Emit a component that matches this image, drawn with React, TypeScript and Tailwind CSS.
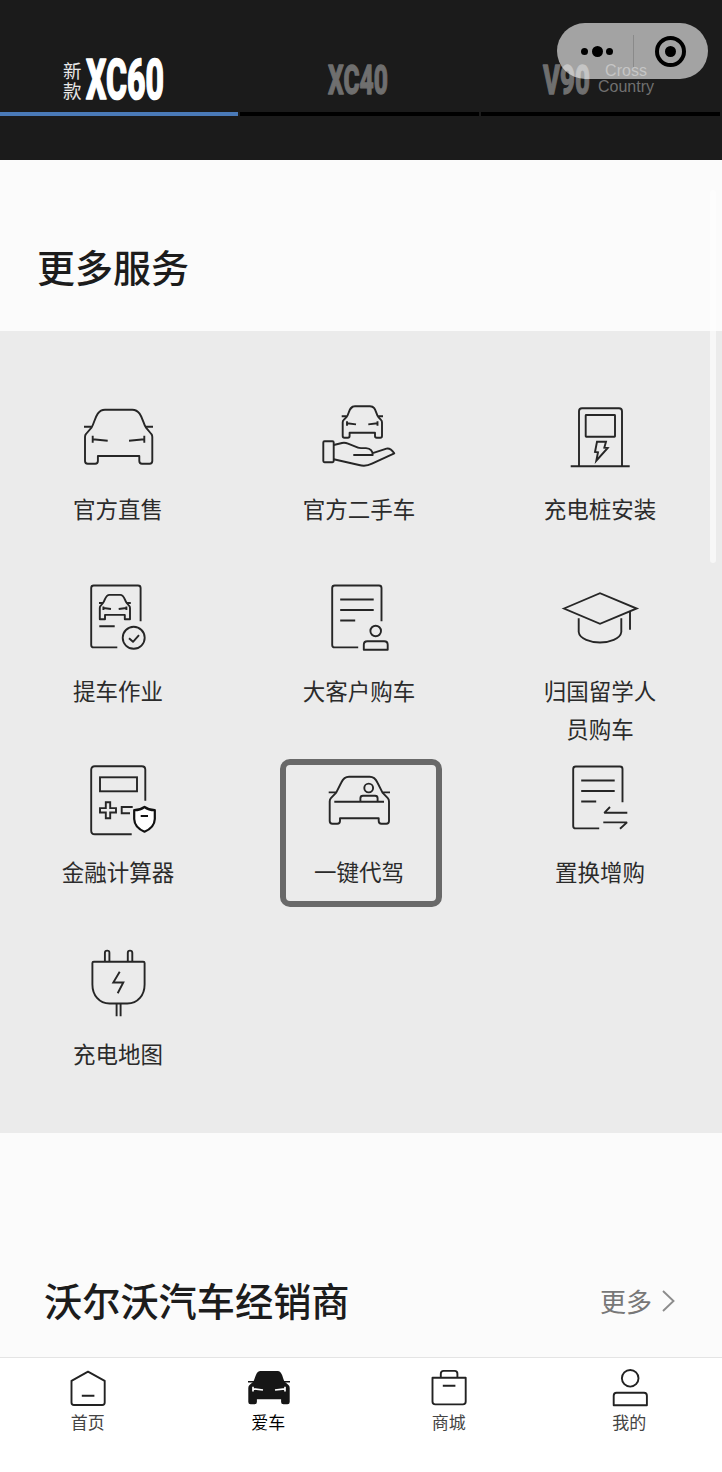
import React from 'react';

type IconProps = { children: React.ReactNode };

// Shared frame for the outlined service icons
const LineIcon: React.FC<IconProps> = ({ children }) => (
  <svg
    viewBox="0 0 81 80"
    className="w-[81px] h-20 shrink-0"
    fill="none"
    stroke="#262626"
    strokeWidth="1.9"
    strokeLinejoin="round"
  >
    {children}
  </svg>
);

const TabIcon: React.FC<IconProps> = ({ children }) => (
  <svg
    viewBox="0 0 44 44"
    className="size-11 shrink-0"
    fill="none"
    stroke="#222"
    strokeWidth="1.9"
    strokeLinejoin="round"
  >
    {children}
  </svg>
);

const DocumentLines = () => (
  <path d="M39.2 69.4 H15.7 Q13.2 69.4 13.2 66.9 V10 Q13.2 7.5 15.7 7.5 H60 Q62.5 7.5 62.5 10 V43.3 M21.2 21.5 H54.7 M21.2 32 H54.7 M21.2 42.5 H36.2" />
);

const SERVICES = [
  {
    label: '官方直售',
    icon: (
      <LineIcon>
        <path d="M13.7 31.3 C17 26.5 17.5 13.7 27 13.7 H54.3 C63.8 13.7 64.5 26.5 67.8 31.3 L73.3 38 Q74.3 39 74.3 41 V65 Q74.3 67.7 71.6 67.7 H64 Q61.3 67.7 61.3 65 V60 H19.9 V65 Q19.9 67.7 17.2 67.7 H9.7 Q7 67.7 7 65 V41 Q7 39 8 38 Z" />
        <path d="M6 30.8 H13.7 M67.8 30.8 H75 M14.7 39.7 V46.7 M14.7 43.3 L29.7 44.7 M66.3 39.7 V46.7 M66.3 43.3 L51 44.7" />
      </LineIcon>
    ),
  },
  {
    label: '官方二手车',
    icon: (
      <LineIcon>
        <path d="M27.7 20.8 C30.5 17 30 10.3 36 10.3 H51 C57 10.3 56.4 17 59.2 20.8 L62.2 24.2 Q63 25 63 26.5 V40 Q63 41.7 61.3 41.7 H57.7 Q56 41.7 56 40 V36.7 H30.6 V40 Q30.6 41.7 28.9 41.7 H25.4 Q23.7 41.7 23.7 40 V26.5 Q23.7 25 24.5 24.2 Z" />
        <path d="M22.7 20.3 H27.7 M59.2 20.3 H64 M28 25.3 V29.7 M28 27.3 L37 28.4 M58.5 25.3 V29.7 M58.5 27.3 L49.3 28.4" />
        <rect x="4.3" y="45.3" width="10.4" height="21" rx="1.2" />
        <path d="M14.7 49 L23 47 Q26 46.4 29 47.6 L39 51.7 Q40 52.1 42 52.1 H47 Q53.7 52.5 53.7 59 H34.3 M53.7 57.2 L67.5 52.6 Q71.5 51.8 75.3 57.3 L53 67.7 Q46.5 71 40 69 L14.7 63.2" />
      </LineIcon>
    ),
  },
  {
    label: '充电桩安装',
    icon: (
      <LineIcon>
        <path d="M19 70 V15.3 Q19 12.3 22 12.3 H59 Q62 12.3 62 15.3 V70 M10.7 70.3 H69.7" />
        <rect x="25.7" y="19" width="29.3" height="21.7" rx="0.5" />
        <path d="M37 45.7 H46 L44.3 51.7 L47.7 52 L36.3 64.7 L38 56.3 L35 56 Z" strokeLinejoin="miter" />
      </LineIcon>
    ),
  },
  {
    label: '提车作业',
    icon: (
      <LineIcon>
        <path d="M39.3 69.4 H15.7 Q13.2 69.4 13.2 66.9 V10 Q13.2 7.5 15.7 7.5 H60 Q62.6 7.5 62.6 10 V43.2 M21.3 48.2 H36.7" />
        <path d="M25 25 C27.4 22 27.2 16.9 31.5 16.9 H42.2 C46.5 16.9 46.3 22 48.7 25 L51.3 28 Q52 28.7 52 30 V41.2 H46.8 V36.9 H27 V41.2 H21.8 V30 Q21.8 28.7 22.5 28 Z" />
        <path d="M21 25 H25 M48.7 25 H52.8 M25.4 28.4 V32 M25.4 30 L33 31 M48.4 28.4 V32 M48.4 30 L40.7 31" />
        <circle cx="55.7" cy="59.8" r="11" />
        <path d="M51 60.2 L55 63.8 L61 57.2" />
      </LineIcon>
    ),
  },
  {
    label: '大客户购车',
    icon: (
      <LineIcon>
        <DocumentLines />
        <circle cx="56.7" cy="53" r="5.3" />
        <path d="M44.8 71.8 V66.8 Q44.8 63.3 48.3 63.3 H65.2 Q68.7 63.3 68.7 66.8 V71.8 Z" />
      </LineIcon>
    ),
  },
  {
    label: '归国留学人员购车',
    icon: (
      <LineIcon>
        <path d="M4 30.5 L40 15.2 L76.7 30.5 L40 45.8 Z" strokeLinejoin="miter" />
        <path d="M18.7 40.2 V54 C19.5 61 31 64.5 40 64.5 S60.5 61 61.3 54 V40.2 M70 33.3 V51.8" />
      </LineIcon>
    ),
  },
  {
    label: '金融计算器',
    icon: (
      <LineIcon>
        <path d="M53.7 75.3 H16.8 Q13.2 75.3 13.2 71.8 V10.8 Q13.2 7.3 16.8 7.3 H63.8 Q67.3 7.3 67.3 10.8 V41.7" />
        <g strokeLinejoin="miter">
          <rect x="22" y="18.3" width="37" height="14" />
          <path d="M27.8 43.3 H32.2 V49.1 H38 V53.5 H32.2 V59.3 H27.8 V53.5 H22 V49.1 H27.8 Z M54.7 48 H43.7 V54.3 H52" />
        </g>
        <path
          d="M66.5 48 Q70.5 51 76.8 51.2 V60 Q76.5 68.5 66.5 72.7 Q56.5 68.5 56.2 60 V51.2 Q62.5 51 66.5 48 Z M62.7 57 H70"
          fill="#fff"
          stroke="#111"
          strokeWidth="2.2"
        />
      </LineIcon>
    ),
  },
  {
    label: '一键代驾',
    highlighted: true,
    icon: (
      <LineIcon>
        <path d="M17.2 33.7 L22.3 23.5 Q25 17.7 30 17.7 H50.7 Q55.7 17.7 58.4 23.5 L63.5 33.7 L68.8 39.2 Q70 40.5 70 42.5 V62 Q70 64.7 67.3 64.7 H62.4 Q59.7 64.7 59.7 62 V59.3 H21 V62 Q21 64.7 18.3 64.7 H13.4 Q10.7 64.7 10.7 62 V42.5 Q10.7 40.5 11.9 39.2 Z" />
        <path d="M9.7 33.4 H17 M63.7 33.4 H71 M15.3 42.7 H65 M41.4 42.7 V39.2 Q41.4 36.7 43.9 36.7 H56.1 Q58.6 36.7 58.6 39.2 V42.7" />
        <circle cx="49.7" cy="29" r="4.4" />
      </LineIcon>
    ),
  },
  {
    label: '置换增购',
    icon: (
      <LineIcon>
        <DocumentLines />
        <path d="M50 48 L44.3 53.8 H67.3 M43.3 63.4 H67 L60 69.7" strokeLinejoin="bevel" />
      </LineIcon>
    ),
  },
  {
    label: '充电地图',
    icon: (
      <LineIcon>
        <path d="M15.8 20.7 H65.2 Q66.6 20.7 66.6 22.1 V43.5 C66.6 54 60 62.5 49.3 62.5 H31.6 C21 62.5 14.4 54 14.4 43.5 V22.1 Q14.4 20.7 15.8 20.7 Z" />
        <path d="M26.9 20.5 V11.7 Q26.9 9.6 29.2 9.6 T31.4 11.7 V20.5 M49.8 20.5 V11.7 Q49.8 9.6 52 9.6 T54.3 11.7 V20.5 M38.6 62.5 V75.2 M42.6 62.5 V75.2" />
        <path d="M41.7 30.8 L35.3 41.5 H45.3 L39.7 52.2" strokeLinejoin="miter" />
      </LineIcon>
    ),
  },
];

const TABS = [
  {
    label: '首页',
    icon: (
      <TabIcon>
        <path d="M5.5 14.8 L22 5.6 L38.7 14.8 V36.5 Q38.7 39 36.2 39 H8 Q5.5 39 5.5 36.5 Z M15.8 29.7 H28.4" />
      </TabIcon>
    ),
  },
  {
    label: '爱车',
    active: true,
    icon: (
      <TabIcon>
        <path
          d="M6.3 15.8 C8.2 13 8.6 5 13.5 5 H30.5 C35.4 5 35.8 13 37.7 15.8 L41.5 19 Q42.7 20 42.7 22 V36 Q42.7 38.3 40.4 38.3 H36.4 Q34.1 38.3 34.1 36 V33.3 H9.9 V36 Q9.9 38.3 7.6 38.3 H3.6 Q1.3 38.3 1.3 36 V22 Q1.3 20 2.5 19 Z"
          fill="#161616"
          stroke="none"
        />
        <path d="M1 15.7 H8 M36 15.7 H43" stroke="#161616" strokeWidth="1.6" />
        <path d="M6 20.7 V25.5 M6 22.8 L16 24 M38 20.7 V25.5 M38 22.8 L28 24" stroke="#fff" strokeWidth="1.7" />
      </TabIcon>
    ),
  },
  {
    label: '商城',
    icon: (
      <TabIcon>
        <path d="M5.5 11.8 H38.7 V35.6 Q38.7 38.4 35.9 38.4 H8.3 Q5.5 38.4 5.5 35.6 Z M13.8 11.8 V7.7 Q13.8 4.9 16.6 4.9 H27.6 Q30.4 4.9 30.4 7.7 V11.8 M15.8 19.8 H28.4" />
      </TabIcon>
    ),
  },
  {
    label: '我的',
    icon: (
      <TabIcon>
        <circle cx="22.2" cy="12.3" r="8.3" />
        <path d="M5.7 39.2 V29.7 Q5.7 26.8 8.6 26.8 H36 Q38.9 26.8 38.9 29.7 V39.2 Z" />
      </TabIcon>
    ),
  },
];

type ModelNameProps = { name: string; width: number; height: number; className: string };

// Condensed model lettering, squeezed to the given box
const ModelName: React.FC<ModelNameProps> = ({ name, width, height, className }) => (
  <svg width={width} height={height} className={`shrink-0 overflow-visible ${className}`}>
    <text
      x="0"
      y={height - 0.8}
      textLength={width}
      lengthAdjust="spacingAndGlyphs"
      fontSize={(height - 1.5) / 0.715}
      fontFamily="Roboto, 'Liberation Sans', sans-serif"
      fontWeight="800"
      fill="currentColor"
      stroke="currentColor"
      strokeWidth={height / 24}
      strokeLinejoin="round"
    >
      {name}
    </text>
  </svg>
);

const ModelTabs = () => (
  <header className="relative h-40 bg-[#1b1b1b]">
    <nav className="grid h-[116px] grid-cols-[238px_239px_239px] gap-[2px]">
      <div className="flex items-end border-b-4 border-[#4a7ab8] pb-3 pl-[63px]">
        <span className="w-[19px] mr-1 text-[18.5px] leading-[19.5px] text-[#e8e8e8]">新款</span>
        <ModelName name="XC60" width={78} height={41} className="text-white" />
      </div>
      <div className="flex items-end border-b-4 border-black pb-[17px] pl-[88px]">
        <ModelName name="XC40" width={60} height={31} className="text-[#6f6f6f]" />
      </div>
      <div className="flex items-end border-b-4 border-black pb-[17px] pl-[62px]">
        <ModelName name="V90" width={47} height={31} className="text-[#6f6f6f]" />
        <span className="ml-[7px] w-[58px] text-center font-['Liberation_Sans',sans-serif] text-base leading-4 text-[#707070]">
          Cross Country
        </span>
      </div>
    </nav>
    <div className="absolute top-[23px] left-[557px] flex h-14 w-[151px] items-center rounded-full bg-white/60">
      <div className="flex w-[76px] items-center justify-center gap-[3.5px] pl-1">
        <i className="size-[7px] rounded-full bg-black" />
        <i className="size-[11px] rounded-full bg-black" />
        <i className="size-[7px] rounded-full bg-black" />
      </div>
      <div className="h-8 w-px bg-black/15" />
      <div className="flex flex-1 justify-center pr-[2px]">
        <div className="flex size-[31px] items-center justify-center rounded-full border-4 border-black">
          <i className="size-[11px] rounded-full bg-black" />
        </div>
      </div>
    </div>
  </header>
);

export default function App() {
  return (
    <div className="relative flex h-[1472px] w-[722px] flex-col overflow-hidden bg-[#fbfbfb] font-['Noto_Sans_CJK_SC',sans-serif] text-[#1c1c1c]">
      <ModelTabs />

      <h2 className="flex h-[171px] items-center pt-10 pl-[37px] text-[38px] font-medium">
        更多服务
      </h2>

      <section className="h-[802px] shrink-0 bg-[#ebebeb] pt-[65px]">
        <div className="-ml-[2px] grid w-[723px] auto-rows-[181.5px] grid-cols-3">
          {SERVICES.map((service) => (
            <div key={service.label} className="relative flex flex-col items-center">
              {service.icon}
              <p className="mt-[13px] mr-px w-[116px] text-center text-[22.5px] leading-[38px] text-[#2b2b2b]">
                {service.label}
              </p>
              {service.highlighted && (
                <div className="absolute top-0 left-[41px] h-[148px] w-[162px] rounded-[10px] border-6 border-[#696969]" />
              )}
            </div>
          ))}
        </div>
      </section>

      <section className="flex flex-1 items-end justify-between pr-[47px] pb-[28px] pl-11">
        <h2 className="text-[38.2px] leading-[58px] font-medium">沃尔沃汽车经销商</h2>
        <div className="flex items-center gap-[10px] text-[26px] leading-[56px] text-[#777]">
          更多
          <svg viewBox="0 0 13 22" className="h-[22px] w-[13px]" fill="none" stroke="#8c8c8c" strokeWidth="1.9">
            <path d="M1 1 L11.5 11 L1 21" />
          </svg>
        </div>
      </section>

      <footer className="h-[115px] shrink-0 border-t border-[#e4e4e4] bg-white">
        <nav className="-ml-[2px] grid w-[722px] grid-cols-4 pt-2">
          {TABS.map((tab) => (
            <div key={tab.label} className="flex flex-col items-center">
              {tab.icon}
              <span
                className={`mr-px text-[17px] leading-6 ${tab.active ? 'text-black' : 'text-[#444]'}`}
              >
                {tab.label}
              </span>
            </div>
          ))}
        </nav>
      </footer>

      {/* scroll indicator */}
      <div className="absolute top-[190px] left-[710px] h-[373px] w-[6px] rounded-full bg-white/60" />
    </div>
  );
}
